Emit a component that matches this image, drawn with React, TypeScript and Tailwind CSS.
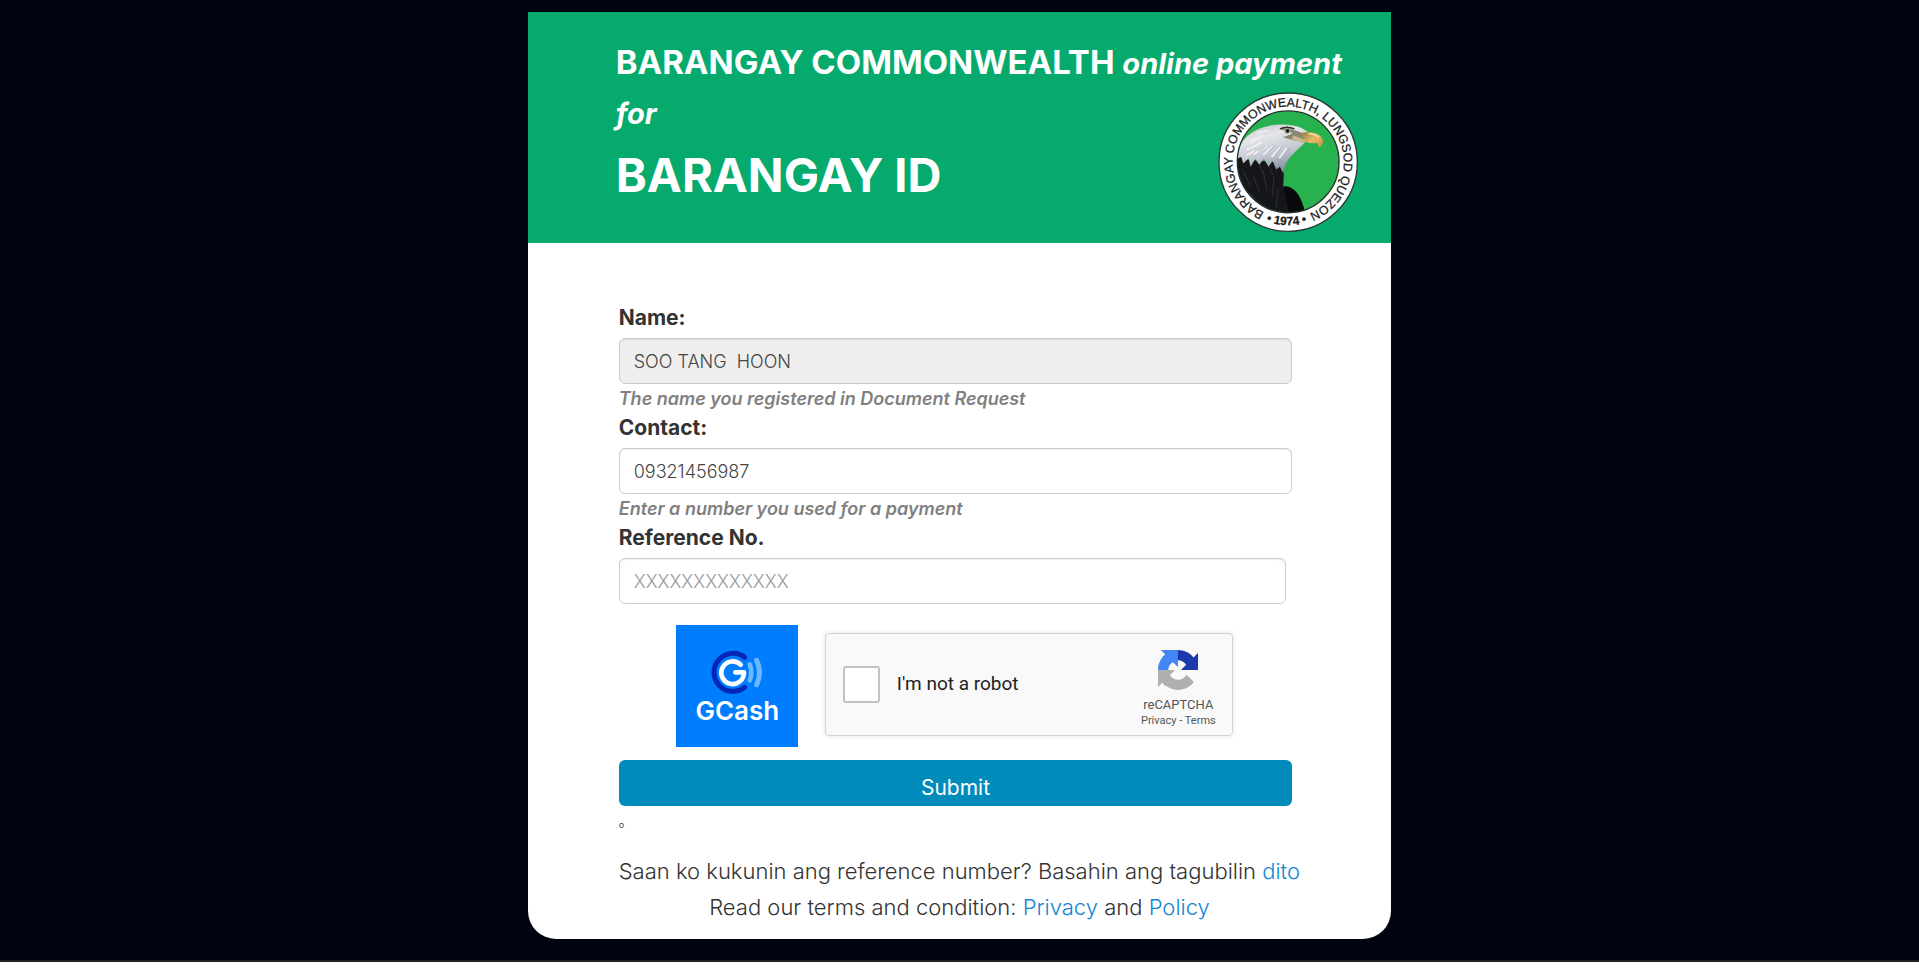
function BarangaySeal() {
  return (
    <svg viewBox="54 38 424 422" className="h-[141px] w-[141px]" role="img" aria-label="Barangay Commonwealth seal">
      <defs>
        <clipPath id="seal-inner">
          <circle cx="265" cy="247" r="152" />
        </clipPath>
        <path id="seal-ring" d="M 193 398.700 A 167 167 0 1 1 322 405" />
        <path id="seal-base" d="M 150 399 A 190 190 0 0 0 380 399" />
        <linearGradient id="seal-head" x1="0" y1="0" x2="0.4" y2="1">
          <stop offset="0" stopColor="#b9bcc2" />
          <stop offset="0.35" stopColor="#e4e6e9" />
          <stop offset="0.7" stopColor="#c3c7d2" />
          <stop offset="1" stopColor="#8c92a3" />
        </linearGradient>
        <linearGradient id="seal-beak" x1="0" y1="0" x2="1" y2="1">
          <stop offset="0" stopColor="#8f7b3c" />
          <stop offset="0.5" stopColor="#e6b968" />
          <stop offset="1" stopColor="#c88f3e" />
        </linearGradient>
      </defs>
      <circle cx="265" cy="248" r="208" fill="#fff" stroke="#2c3a35" strokeWidth="4" />
      <circle cx="265" cy="247" r="153" fill="#27b24f" />
      <g clipPath="url(#seal-inner)">
        <path d="M100 225 L140 240 L245 250 L252 285 L250 322 C275 318 300 336 316 400 L100 410Z" fill="#15161a" />
        <path d="M250 322 C275 318 300 336 316 400 L268 400 Z" fill="#08090b" />
        <path d="M130 275l22 45M160 290l20 50M190 275l12 60M222 290l-4 60M150 340l30 40M235 330l-6 55M180 255l10 30M210 262l8 25" stroke="#292a30" strokeWidth="4" fill="none" />
        <path
          d="M105 240 C120 185 140 160 190 143 C225 132 275 130 306 146 L330 160 L316 187 C302 205 270 226 256 256 L249 279 L240 262 L229 270 L218 244 L206 262 L192 238 L178 256 L166 238 L152 262 L146 236 L130 252 L124 232 Z"
          fill="url(#seal-head)"
        />
        <path d="M150 190l40-22M140 212l46-24M160 225l40-26M190 226l30-26M215 232l28-30M238 236l22-30M170 160l36-8M140 228l22-14" stroke="#eff0f2" strokeWidth="5" fill="none" />
        <path d="M176 215l20-16M205 218l20-20M228 224l18-22M255 222l16-18" stroke="#acb0bb" strokeWidth="3" fill="none" />
        <path d="M238 148 Q262 138 284 152 L308 160 L316 186 Q280 184 248 172 Q270 168 278 160 Z" fill="#8b8775" />
        <path d="M280 168 Q300 174 316 182 L312 192 Q292 186 276 178Z" fill="#c6b98b" />
        <circle cx="262" cy="154" r="9" fill="#b8b39a" />
        <circle cx="263" cy="154" r="5.500" fill="#15161a" />
        <path d="M240 148 Q262 138 284 148" stroke="#33332f" strokeWidth="4" fill="none" />
        <path d="M306 160 Q322 154 346 160 Q368 168 370 186 Q368 198 358 203 L352 190 Q332 194 314 186 Z" fill="url(#seal-beak)" />
        <path d="M326 162 Q346 162 358 174" stroke="#f6dca0" strokeWidth="5" fill="none" />
      </g>
      <circle cx="265" cy="247" r="153" fill="none" stroke="#26302b" strokeWidth="4" />
      <g fontFamily="'Liberation Sans', Arial, sans-serif" fontSize="37" fill="#1b1b1b" stroke="#1b1b1b" strokeWidth="0.800">
        <text>
          <textPath href="#seal-ring">BARANGAY COMMONWEALTH, LUNGSOD QUEZON</textPath>
        </text>
        <text textAnchor="middle" fontWeight="bold" fontSize="36">
          <textPath href="#seal-base" startOffset="48%">• 1974 •</textPath>
        </text>
      </g>
    </svg>
  );
}

function GCashLogo() {
  return (
    <svg viewBox="18 18 366 366" className="h-[122px] w-[122px] shrink-0" role="img" aria-label="GCash">
      <rect x="18" y="18" width="366" height="366" fill="#007dff" />
      <g fill="none" strokeLinecap="round">
        <path d="M224 115 A57 57 0 1 0 224 205" stroke="#0527b8" strokeWidth="15" />
        <path d="M212 137 A34 34 0 1 0 222 160 H196" stroke="#fff" strokeWidth="14" strokeLinejoin="round" />
        <path d="M239 136 Q249 160 239 184" stroke="#6ab9ff" strokeWidth="14" />
        <path d="M260 124 Q277 160 260 197" stroke="#6ab9ff" strokeWidth="15" />
      </g>
      <text x="202" y="303" textAnchor="middle" fontFamily="Inter, sans-serif" fontWeight="600" fontSize="78" fill="#fff">
        GCash
      </text>
    </svg>
  );
}

function RecaptchaLogo() {
  return (
    <svg viewBox="0 0 64 64" className="h-10 w-10" aria-hidden="true">
      <path
        fill="#1c3aa9"
        d="M64 31.955l-.033-1.370V4.687l-7.160 7.160C50.948 4.674 42.033.093 32.050.093c-10.400 0-19.622 4.960-25.458 12.640l11.736 11.860a15.550 15.550 0 0 1 4.754-5.334c2.050-1.600 4.952-2.906 8.968-2.906.485 0 .860.057 1.135.163 4.976.393 9.288 3.140 11.828 7.124l-8.307 8.307L64 31.953"
      />
      <path
        fill="#4285f4"
        d="M31.862.094l-1.370.033H4.594l7.160 7.160C4.580 13.147 0 22.060 0 32.046c0 10.400 4.960 19.622 12.640 25.458L24.500 45.768a15.550 15.550 0 0 1-5.334-4.754c-1.600-2.050-2.906-4.952-2.906-8.968 0-.485.057-.860.163-1.135.393-4.976 3.140-9.288 7.124-11.828l8.307 8.307L31.860.095"
      />
      <path
        fill="#b0b0b0"
        d="M.001 32.045l.033 1.370v25.898l7.160-7.160c5.860 7.173 14.774 11.754 24.760 11.754 10.400 0 19.622-4.960 25.458-12.640l-11.736-11.860a15.550 15.550 0 0 1-4.754 5.334c-2.050 1.600-4.952 2.906-8.968 2.906-.485 0-.860-.057-1.135-.163-4.976-.393-9.288-3.140-11.828-7.124l8.307-8.307L.001 32.046"
      />
    </svg>
  );
}

const labelClass = "block pb-[6px] text-[21px] leading-[28px] font-bold text-[#333]";
const inputClass =
  "block h-[46px] w-full rounded-md border border-[#ccc] px-[14px] text-[18px] font-light text-[#444] shadow-[inset_0_1px_1px_rgba(0,0,0,0.075)] outline-none placeholder:text-[#999]";
const hintClass = "text-[18px] leading-[30px] font-semibold text-[#808080] italic";
const linkClass = "text-[#1286d3]";

export default function App() {
  return (
    <div className="bg-white font-['Inter',sans-serif]">
      <div className="border-b-2 border-[#222] bg-[#000411] pt-3 pb-[21px]">
        <main className="mx-auto w-[45%] min-w-[720px] overflow-hidden rounded-b-[28px] bg-white">
          <header className="grid bg-[#06aa6d] pt-[25px] pr-8 pb-[10px] pl-[88px] text-white">
            <div className="col-start-1 row-start-1 pb-[26px]">
              <h1 className="text-[33px] leading-[50px] font-bold">
                BARANGAY COMMONWEALTH <em className="text-[29px] leading-none">online payment for</em>
              </h1>
              <h2 className="pt-[6px] text-[47px] leading-[64px] font-bold">BARANGAY ID</h2>
            </div>
            <div className="col-start-1 row-start-1 self-end justify-self-end">
              <BarangaySeal />
            </div>
          </header>

          <form className="pt-[61px] pr-[91px] pb-[14px] pl-[91px]" onSubmit={(e) => e.preventDefault()}>
            <div className="pr-2">
              <label htmlFor="name" className={labelClass}>
                Name:
              </label>
              <input id="name" className={`${inputClass} bg-[#eee]`} defaultValue="SOO TANG  HOON" readOnly />
              <p className={hintClass}>The name you registered in Document Request</p>

              <label htmlFor="contact" className={labelClass}>
                Contact:
              </label>
              <input id="contact" className={`${inputClass} bg-white`} defaultValue="09321456987" />
              <p className={hintClass}>Enter a number you used for a payment</p>

              <label htmlFor="reference" className={labelClass}>
                Reference No.
              </label>
              <div className="pr-[6px]">
                <input id="reference" className={`${inputClass} bg-white`} placeholder="XXXXXXXXXXXXX" />
              </div>

              <div className="flex items-start gap-[27px] pt-[21px] pl-[57px]">
                <GCashLogo />
                <div className="mt-2 flex h-[103px] w-[408px] items-center justify-between rounded-[4px] border border-[#d3d3d3] bg-[#f9f9f9] pr-4 pl-[17px] shadow-[0_0_4px_1px_rgba(0,0,0,0.08)]">
                  <div className="flex items-center gap-[17px]">
                    <input
                      id="robot"
                      type="checkbox"
                      className="h-[37px] w-[37px] appearance-none rounded-[3px] border-2 border-[#c1c1c1] bg-white"
                    />
                    <label htmlFor="robot" className="font-['Roboto',sans-serif] text-[19px] text-[#222]">
                      I'm not a robot
                    </label>
                  </div>
                  <div className="flex flex-col items-center pt-2 font-['Roboto',sans-serif] text-[#555]">
                    <RecaptchaLogo />
                    <span className="pt-[6px] text-[13px] leading-[18px]">reCAPTCHA</span>
                    <span className="text-[11px] leading-[14px]">
                      <a href="#privacy">Privacy</a> - <a href="#terms">Terms</a>
                    </span>
                  </div>
                </div>
              </div>

              <button type="submit" className="mt-[13px] block h-[46px] w-full rounded-md bg-[#008cba] pt-[10px] text-[21px] text-white">
                Submit
              </button>
              <p className="pt-[10px] text-[9px] leading-[18px] text-[#444]">o</p>
            </div>

            <p className="pt-[19px] text-[22px] leading-9 font-light whitespace-nowrap text-[#333]">
              Saan ko kukunin ang reference number? Basahin ang tagubilin{" "}
              <a href="#dito" className={linkClass}>
                dito
              </a>
            </p>
            <p className="text-center text-[22px] leading-9 font-light text-[#333]">
              Read our terms and condition:{" "}
              <a href="#privacy-terms" className={linkClass}>
                Privacy
              </a>{" "}
              and{" "}
              <a href="#policy" className={linkClass}>
                Policy
              </a>
            </p>
          </form>
        </main>
      </div>
    </div>
  );
}
